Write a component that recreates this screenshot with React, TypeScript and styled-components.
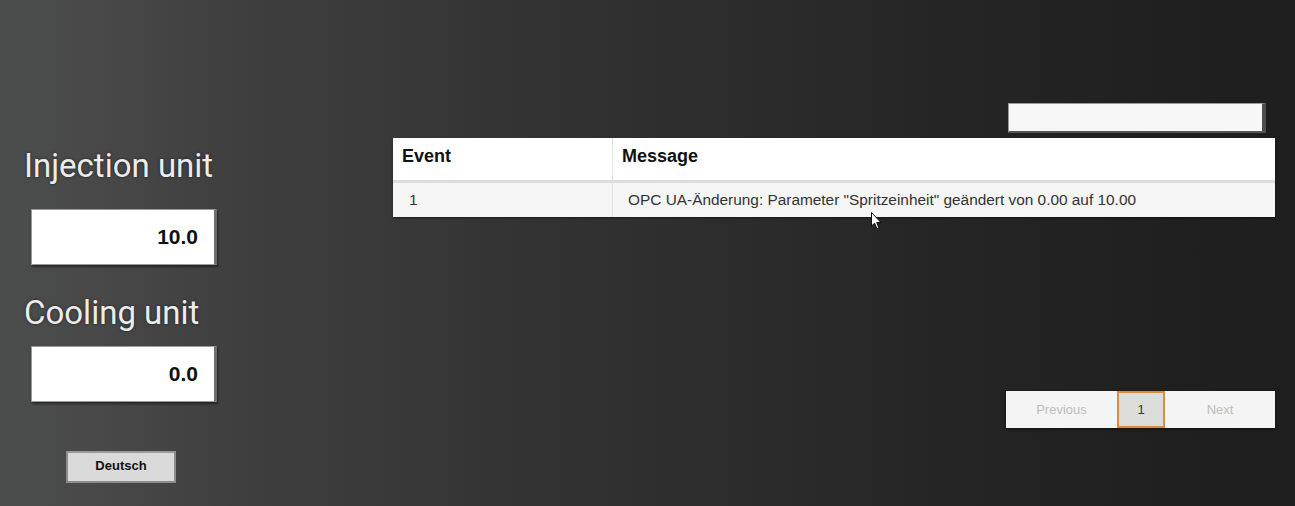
import React from "react";
import styled, { createGlobalStyle } from "styled-components";

const Global = createGlobalStyle`
  html, body { margin: 0; padding: 0; }
  body { font-family: "Liberation Sans", Arial, sans-serif; }
`;

const Page = styled.div`
  position: relative;
  width: 1295px;
  height: 506px;
  overflow: hidden;
  display: grid;
  grid-template-columns: 393px 1fr;
  background: linear-gradient(
    to right,
    #4b4d4c 0%,
    #484848 8%,
    #3f3f3f 18%,
    #3a3a3a 28%,
    #333333 40%,
    #2d2d2d 55%,
    #272727 68%,
    #222222 82%,
    #1e1e1e 100%
  );
`;

const LeftPanel = styled.div`
  display: flex;
  flex-direction: column;
  padding: 145px 0 0 24px;
`;

const Label = styled.div<{ $gap?: number }>`
  font-family: Roboto, "Liberation Sans", sans-serif;
  font-size: 33px;
  line-height: 42px;
  color: #ececec;
  text-shadow: 0 0 3px rgba(0, 0, 0, 0.6);
  margin-top: ${(p) => p.$gap ?? 0}px;
`;

const ValueBox = styled.div<{ $gap: number }>`
  box-sizing: border-box;
  width: 186px;
  height: 56px;
  margin: ${(p) => p.$gap}px 0 0 7px;
  background: #ffffff;
  border: 1px solid #9a9a9a;
  border-right: 3px solid #6e6e6e;
  box-shadow: 1px 2px 2px rgba(0, 0, 0, 0.45);
  display: flex;
  align-items: center;
  justify-content: flex-end;
  padding-right: 16px;
  font-family: "Liberation Sans", Arial, sans-serif;
  font-weight: bold;
  font-size: 21px;
  color: #111;
`;

const LangButton = styled.button`
  box-sizing: border-box;
  width: 110px;
  height: 32px;
  margin: 49px 0 0 42px;
  background: #dadada;
  border: 2px solid #8c8c8c;
  border-top-color: #9a9a9a;
  font-family: "Liberation Sans", Arial, sans-serif;
  font-weight: bold;
  font-size: 13px;
  color: #111;
  padding: 0 0 3px;
`;

const RightPanel = styled.div`
  display: flex;
  flex-direction: column;
  padding: 103px 20px 0 0;
`;

const SearchRow = styled.div`
  display: flex;
  justify-content: flex-end;
  padding-right: 9px;
`;

const SearchBox = styled.div`
  box-sizing: border-box;
  width: 258px;
  height: 30px;
  background: #f7f7f7;
  border: 1px solid #9a9a9a;
  border-right: 4px solid #4e4e4e;
  border-bottom: 2px solid #555;
`;

const Table = styled.div`
  margin-top: 5px;
  background: #ffffff;
  box-shadow: 0 1px 2px rgba(0, 0, 0, 0.5);
`;

const Row = styled.div<{ $head?: boolean }>`
  display: grid;
  grid-template-columns: 220px 1fr;
  height: ${(p) => (p.$head ? 42 : 34)}px;
  background: ${(p) => (p.$head ? "#ffffff" : "#f5f5f5")};
  border-bottom: ${(p) => (p.$head ? "3px solid #dcdcdc" : "none")};
`;

const Cell = styled.div<{ $head?: boolean; $first?: boolean }>`
  display: flex;
  align-items: center;
  padding-left: ${(p) => (p.$head ? 9 : p.$first ? 16 : 15)}px;
  padding-bottom: ${(p) => (p.$head ? 6 : 0)}px;
  border-right: ${(p) => (p.$first ? "1px solid #e2e2e2" : "none")};
  font-family: "Liberation Sans", Arial, sans-serif;
  font-size: ${(p) => (p.$head ? 18 : 15.4)}px;
  font-weight: ${(p) => (p.$head ? "bold" : "normal")};
  color: ${(p) => (p.$head ? "#111" : "#333")};
  white-space: nowrap;
`;

const PagerRow = styled.div`
  display: flex;
  justify-content: flex-end;
  margin-top: 174px;
`;

const Pager = styled.div`
  display: flex;
  height: 37px;
  background: #f4f4f4;
  box-shadow: 0 1px 3px rgba(0, 0, 0, 0.6);
`;

const PageBtn = styled.div<{ $w: number; $active?: boolean }>`
  box-sizing: border-box;
  width: ${(p) => p.$w}px;
  display: flex;
  align-items: center;
  justify-content: center;
  font-family: "Liberation Sans", Arial, sans-serif;
  font-size: 13px;
  color: ${(p) => (p.$active ? "#333" : "#bdbdbd")};
  background: ${(p) => (p.$active ? "#dcdcd8" : "transparent")};
  border: ${(p) => (p.$active ? "2px solid #e08a3c" : "none")};
`;

const Cursor = styled.svg`
  position: absolute;
  left: 871px;
  top: 212px;
`;

export default function App() {
  return (
    <>
      <Global />
      <Page>
        <LeftPanel>
          <Label>Injection unit</Label>
          <ValueBox $gap={22}>10.0</ValueBox>
          <Label $gap={27}>Cooling unit</Label>
          <ValueBox $gap={12}>0.0</ValueBox>
          <LangButton>Deutsch</LangButton>
        </LeftPanel>
        <RightPanel>
          <SearchRow>
            <SearchBox />
          </SearchRow>
          <Table>
            <Row $head>
              <Cell $head $first>Event</Cell>
              <Cell $head>Message</Cell>
            </Row>
            <Row>
              <Cell $first>1</Cell>
              <Cell>
                OPC UA-Änderung: Parameter "Spritzeinheit" geändert von 0.00 auf 10.00
              </Cell>
            </Row>
          </Table>
          <PagerRow>
            <Pager>
              <PageBtn $w={111}>Previous</PageBtn>
              <PageBtn $w={48} $active>1</PageBtn>
              <PageBtn $w={110}>Next</PageBtn>
            </Pager>
          </PagerRow>
        </RightPanel>
        <Cursor width="12" height="18" viewBox="0 0 12 18">
          <path d="M0.5 0.5 L0.5 14 L3.6 11.2 L6 16.8 L8 15.9 L5.7 10.5 L10 10.5 Z" fill="#fff" stroke="#111" strokeWidth="1" />
        </Cursor>
      </Page>
    </>
  );
}
